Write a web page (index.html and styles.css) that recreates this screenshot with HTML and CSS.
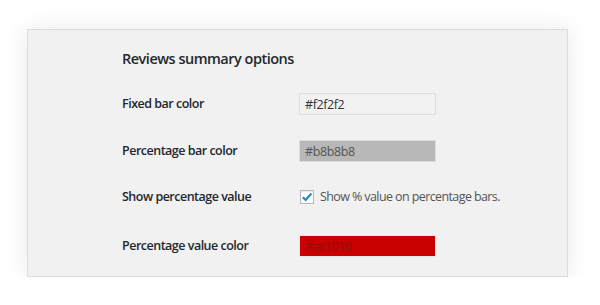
FILE: index.html
```html
<!DOCTYPE html>
<html lang="en">
<head>
  <meta charset="UTF-8" />
  <title>Reviews summary options</title>
  <link rel="stylesheet" href="styles.css">
</head>
<body>

  <div class="panel">
    <h2>Reviews summary options</h2>

    <div class="options">
      <div class="row">
        <label for="fixedColor">Fixed bar color</label>
        <input type="text" id="fixedColor" class="color-input fixed" value="#f2f2f2" />
      </div>

      <div class="row">
        <label for="percentColor">Percentage bar color</label>
        <input type="text" id="percentColor" class="color-input percent" value="#b8b8b8" />
      </div>

      <div class="row row-check">
        <label for="showValue">Show percentage value</label>
        <span class="check-wrap">
          <span class="checkbox">
            <svg width="12" height="12" viewBox="0 0 12 12">
              <path d="M1.8 6.2 L4.6 9 L10.4 2.4" fill="none" stroke="#1e8cbe" stroke-width="2.2" />
            </svg>
          </span>
          <span class="check-text">Show % value on percentage bars.</span>
        </span>
      </div>

      <div class="row row-last">
        <label for="valueColor">Percentage value color</label>
        <input type="text" id="valueColor" class="color-input value" value="#ac1010" />
      </div>
    </div>
  </div>

</body>
</html>
```

FILE: styles.css
```css
* {
  box-sizing: border-box;
  font-family: 'Open Sans', sans-serif;
}

body {
  margin: 0;
  background: #ffffff;
  color: #23282d;
}

.panel {
  width: 541px;
  height: 248px;
  margin: 29px 0 0 27px;
  padding: 18px 0 0 94px;
  background: #f1f1f1;
  border: 1px solid #dcdcdc;
  box-shadow: 0 0 22px rgba(0, 0, 0, 0.09);
}

h2 {
  margin: 0 0 10px;
  font-size: 14.5px;
  font-weight: 600;
  line-height: 22px;
  letter-spacing: -0.5px;
  color: #23282d;
}

.row {
  display: flex;
  align-items: center;
  padding: 13px 0 12px;
}

.row-check {
  padding: 13px 0 12px;
}

.row-last {
  padding: 16px 0 13px;
}

label {
  width: 177px;
  font-size: 12.5px;
  font-weight: 600;
  line-height: 20px;
  letter-spacing: -0.5px;
  color: #23282d;
}

.color-input {
  width: 137px;
  height: 22px;
  margin: 0;
  padding: 0 5px;
  font-size: 12.5px;
  letter-spacing: -0.4px;
  border: 1px solid #dcdcdc;
  outline: none;
}

.color-input.fixed {
  background: #f2f2f2;
  color: #333333;
}

.color-input.percent {
  background: #b8b8b8;
  color: #555555;
}

.color-input.value {
  background: #c90000;
  border-color: #e8e8e8;
  color: #8a1010;
}

.check-wrap {
  display: flex;
  align-items: center;
  gap: 6px;
  font-size: 12.5px;
  letter-spacing: -0.6px;
  color: #555555;
}

.checkbox {
  display: flex;
  align-items: center;
  justify-content: center;
  width: 14px;
  height: 14px;
  margin-left: 1px;
  background: #ffffff;
  border: 1px solid #b4b9be;
  box-shadow: inset 0 1px 2px rgba(0, 0, 0, 0.1);
}

.check-text {
  line-height: 20px;
}
```
